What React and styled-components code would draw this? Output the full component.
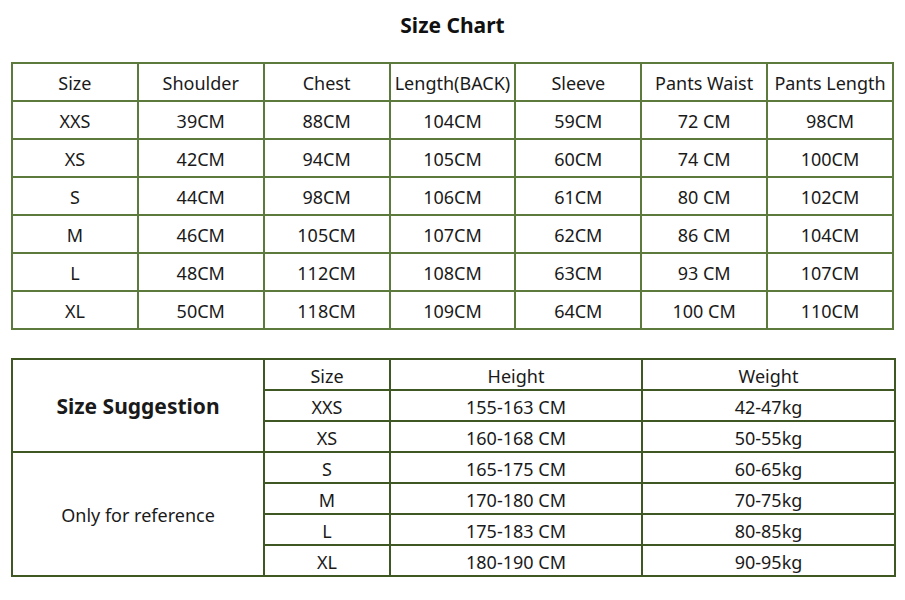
import React from 'react';
import styled, { createGlobalStyle } from 'styled-components';

const GlobalStyle = createGlobalStyle`
  html, body {
    margin: 0;
    padding: 0;
    background: #fff;
  }
  body {
    font-family: "Noto Sans", "Open Sans", sans-serif;
    color: #1a1a1a;
  }
`;

const Page = styled.div`
  width: 905px;
  height: 600px;
  padding: 12px 11px 0 11px;
  box-sizing: border-box;
`;

const Title = styled.h1`
  margin: 0 0 23px 0;
  text-align: center;
  font-size: 21px;
  font-weight: 700;
  line-height: 27px;
  color: #111;
`;

const Table = styled.table`
  border-collapse: collapse;
  table-layout: fixed;
  width: 883px;
  margin-bottom: ${({ gap }) => gap || 0}px;
`;

const Cell = styled.td`
  border: 2px solid ${({ tone }) => tone};
  height: ${({ h }) => h}px;
  padding: 2px 0 0 0;
  text-align: center;
  vertical-align: middle;
  font-size: 18px;
  line-height: 1;
  white-space: nowrap;
  font-weight: ${({ bold }) => (bold ? 700 : 400)};
  ${({ bold }) => bold && 'font-size: 21px;'}
`;

const chartHead = ['Size', 'Shoulder', 'Chest', 'Length(BACK)', 'Sleeve', 'Pants Waist', 'Pants Length'];
const chartRows = [
  ['XXS', '39CM', '88CM', '104CM', '59CM', '72 CM', '98CM'],
  ['XS', '42CM', '94CM', '105CM', '60CM', '74 CM', '100CM'],
  ['S', '44CM', '98CM', '106CM', '61CM', '80 CM', '102CM'],
  ['M', '46CM', '105CM', '107CM', '62CM', '86 CM', '104CM'],
  ['L', '48CM', '112CM', '108CM', '63CM', '93 CM', '107CM'],
  ['XL', '50CM', '118CM', '109CM', '64CM', '100 CM', '110CM'],
];

const suggestRows = [
  ['XXS', '155-163 CM', '42-47kg'],
  ['XS', '160-168 CM', '50-55kg'],
  ['S', '165-175 CM', '60-65kg'],
  ['M', '170-180 CM', '70-75kg'],
  ['L', '175-183 CM', '80-85kg'],
  ['XL', '180-190 CM', '90-95kg'],
];

const LIGHT = '#5b7a3c';
const DARK = '#3e5723';

export default function App() {
  return (
    <Page>
      <GlobalStyle />
      <Title>Size Chart</Title>

      <Table gap={28}>
        <tbody>
          <tr>
            {chartHead.map((h) => (
              <Cell key={h} tone={LIGHT} h={34}>{h}</Cell>
            ))}
          </tr>
          {chartRows.map((row) => (
            <tr key={row[0]}>
              {row.map((v, i) => (
                <Cell key={i} tone={LIGHT} h={34}>{v}</Cell>
              ))}
            </tr>
          ))}
        </tbody>
      </Table>

      <Table>
        <colgroup>
          <col style={{ width: 252 }} />
          <col style={{ width: 126 }} />
          <col style={{ width: 252 }} />
          <col style={{ width: 253 }} />
        </colgroup>
        <tbody>
          <tr>
            <Cell tone={DARK} h={27} rowSpan={3} bold>Size Suggestion</Cell>
            <Cell tone={DARK} h={27}>Size</Cell>
            <Cell tone={DARK} h={27}>Height</Cell>
            <Cell tone={DARK} h={27}>Weight</Cell>
          </tr>
          {suggestRows.map((row, r) => (
            <tr key={row[0]}>
              {r === 2 && (
                <Cell tone={DARK} h={27} rowSpan={4}>Only for reference</Cell>
              )}
              {row.map((v, i) => (
                <Cell key={i} tone={DARK} h={27}>{v}</Cell>
              ))}
            </tr>
          ))}
        </tbody>
      </Table>
    </Page>
  );
}
